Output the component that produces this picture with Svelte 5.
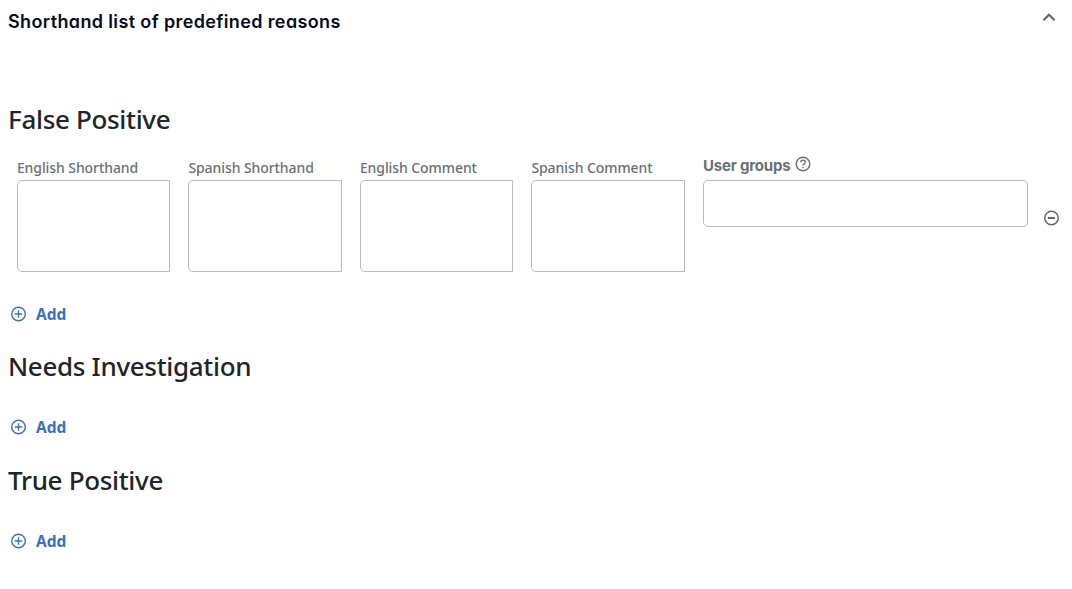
<script>
  const fields = ['English Shorthand', 'Spanish Shorthand', 'English Comment', 'Spanish Comment'];

  let open = $state(true);
  let sections = $state([
    { id: 'false-positive', title: 'False Positive', rows: [{ id: 1 }] },
    { id: 'needs-investigation', title: 'Needs Investigation', rows: [] },
    { id: 'true-positive', title: 'True Positive', rows: [] }
  ]);
  let nextId = 2;

  function addRow(section) {
    section.rows.push({ id: nextId++ });
  }

  function removeRow(section, id) {
    section.rows = section.rows.filter((row) => row.id !== id);
  }
</script>

<div class="page">
  <header class="topline">
    <h1>Shorthand list of predefined reasons</h1>
    <button class="toggle" class:closed={!open} aria-label="Toggle section" onclick={() => (open = !open)}>
      <svg width="14" height="10" viewBox="0 0 14 10"><path d="M1.4 8.3 7 2.7l5.6 5.6" /></svg>
    </button>
  </header>

  {#if open}
    {#each sections as section (section.id)}
      <section>
        <h2>{section.title}</h2>

        {#each section.rows as row (row.id)}
          <div class="row">
            {#each fields as field}
              <label class="field">
                <span class="label">{field}</span>
                <textarea></textarea>
              </label>
            {/each}
            <label class="field">
              <span class="label groups">
                <span class="groups-text">User groups</span>
                <svg width="16" height="16" viewBox="0 0 16 16">
                  <circle cx="8" cy="8" r="6.8" />
                  <path d="M5.8 6.3c0-1.3 1-2.1 2.2-2.1s2.2.8 2.2 2c0 1.6-2.2 1.7-2.2 3.3" />
                  <path d="M8 10.8v1.4" />
                </svg>
              </span>
              <input type="text" />
            </label>
            <button class="remove" aria-label="Remove" onclick={() => removeRow(section, row.id)}>
              <svg width="16" height="16" viewBox="0 0 16 16"><circle cx="7.5" cy="8" r="6.8" /><path class="bar" d="M4 8h7" /></svg>
            </button>
          </div>
        {/each}

        <button class="add" onclick={() => addRow(section)}>
          <svg width="16" height="16" viewBox="0 0 16 16"><circle cx="7.5" cy="8" r="6.8" /><path d="M3.8 8h7.4M7.5 4.3v7.4" /></svg>
          <span>Add</span>
        </button>
      </section>
    {/each}
  {/if}
</div>

<style>
  :global(body){background:#fff}
  .page{padding:8px;font-family:"Segoe UI","Noto Sans","Open Sans",sans-serif;color:#212529}
  .topline{display:flex;justify-content:space-between;align-items:flex-start;height:92px}
  h1{margin:0;font:600 18px/28px Inter,sans-serif;font-feature-settings:"cv11";letter-spacing:.37px;color:#050b1c;white-space:nowrap}
  h2{margin:0;font-size:26px;line-height:38px;font-weight:500;letter-spacing:-.33px;white-space:nowrap}
  section{display:flex;flex-direction:column;align-items:flex-start}
  button{display:flex;align-items:center;border:0;background:none;padding:0;cursor:pointer}
  svg{display:block;fill:none;stroke:currentColor;stroke-width:1.4}
  .toggle{color:#60656b;margin:4px 8px 0 0}
  .toggle svg{stroke-width:2}
  .toggle.closed svg{transform:rotate(180deg)}
  .row{display:grid;grid-template-columns:repeat(4,153.5px) 325px 16px;column-gap:18px;padding:20px 0 0 8.9px}
  .field{display:flex;flex-direction:column;min-width:0}
  .label{height:22px;font-size:14px;line-height:20px;font-weight:500;letter-spacing:-.08px;color:#6b7075;white-space:nowrap}
  .groups{display:flex;gap:4.5px}
  .groups svg{margin-top:-2px}
  .groups-text{font:700 15px/16px Inter,sans-serif;letter-spacing:-.18px}
  textarea,input{display:block;box-sizing:border-box;width:100%;margin:0;border:1px solid #b9babb;background:#fff;outline:0;resize:none}
  textarea{height:92px;border-radius:5px 0 0 5px}
  input{height:47px;border-radius:5px}
  .remove{height:16px;margin-top:52px;margin-left:-2px;color:#60656b}
  .bar{stroke-width:2}
  .add{gap:9px;height:24px;margin:30px 0 21.3px 3px;color:#3f70b5}
  .add span{font:700 15.5px/24px "Segoe UI","Noto Sans",sans-serif}
</style>
